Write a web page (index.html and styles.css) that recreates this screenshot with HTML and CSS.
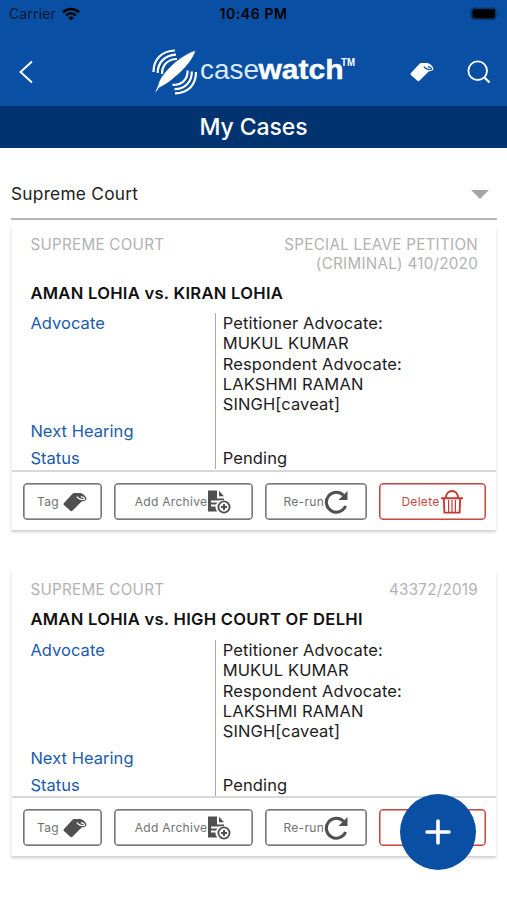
FILE: index.html
```html
<!DOCTYPE html>
<html lang="en">
<head>
<meta charset="utf-8">
<title>My Cases</title>
<link rel="stylesheet" href="styles.css">
</head>
<body>
<svg class="defs" width="0" height="0" aria-hidden="true">
  <symbol id="tag" viewBox="0 0 24 20">
    <path fill="currentColor" d="M.8 11.2 8.8 2.4Q10 1 11.7 1H17.5Q22.8 3 23.4 6.6Q23.6 9.2 18.6 9.4L9.6 18.6Q8.3 19.8 7 18.5L.9 13Q0 12.1 .8 11.2Z"/>
    <path class="tag-hole" d="M13.8 4.6C15 7 19 8 21.4 7.2C22 6 19.8 4.6 17.8 4.9" fill="none"/>
  </symbol>
  <symbol id="archive" viewBox="0 0 24 24">
    <path fill="currentColor" d="M1 .5H10V8.5H17V10.2A7 7 0 0 0 10.2 21.5H1Z"/>
    <path fill="currentColor" d="M12 .8 17 6.2H12Z"/>
    <path d="M4 11.5H13M4 15.5H10" stroke="#fff" stroke-width="1.8"/>
    <circle cx="17" cy="17" r="5.6" fill="#fff" stroke="currentColor" stroke-width="1.8"/>
    <path d="M17 14V20M14 17H20" stroke="currentColor" stroke-width="2"/>
  </symbol>
  <symbol id="rerun" viewBox="0 0 24 24">
    <path d="M19.5 5.2A10 10 0 1 0 21.6 16" fill="none" stroke="currentColor" stroke-width="3"/>
    <path d="M23.5 1V10H14.5Z" fill="currentColor"/>
  </symbol>
  <symbol id="trash" viewBox="0 0 24 24">
    <path d="M1 8.2H23M3.8 8.5 4.4 22.6H19.6L20.2 8.5M6 8C6 3 9 1 12 1S18 3 18 8" fill="none" stroke="currentColor" stroke-width="1.9"/>
    <path d="M8.6 10V22M12 10V22M15.4 10V22" fill="none" stroke="currentColor" stroke-width="1.2"/>
  </symbol>
</svg>

<div class="status-bar">
  <span class="carrier">Carrier</span>
  <svg class="wifi" viewBox="0 0 18 14"><path d="M1 5.3C5.5.9 12.5.9 17 5.3" fill="none" stroke="#000" stroke-width="2.6"/><path d="M4 8.4C7 5.7 11 5.7 14 8.4" fill="none" stroke="#000" stroke-width="2.4"/><path d="M9 13.6 6 10.6Q9 8.4 12 10.6Z"/></svg>
  <span class="clock">10:46 PM</span>
  <svg class="battery" viewBox="0 0 30 14"><rect x=".5" y=".5" width="26" height="12.5" rx="4" fill="#07366f"/><rect x="2.5" y="2.3" width="22.5" height="9" rx="2"/><path d="M28 4.5Q30 6.5 28 8.5Z" fill="#07366f"/></svg>
</div>

<header class="app-bar">
  <svg class="back" viewBox="0 0 16 24"><path d="M14 1.5 2.5 12 14 22.5" fill="none" stroke="#fff" stroke-width="2"/></svg>
  <svg class="logo" viewBox="0 0 206 50">
    <g fill="none" stroke="#fff" stroke-width="2.2">
      <path d="M2.5 25C2.5 12 11 3.8 24 3.5M6.7 26C6.7 15.5 13.5 8.3 25 7.7M11 27C11 18 16.5 12.3 26 12"/>
      <path d="M45 25C45 38 37 46 24 46.3M40.8 24.5C41 35 34 42 23.5 42.2M36.6 23.5C36.8 32 31.5 38 21.5 37.9"/>
    </g>
    <path d="M44.8 3.3C42.5 12 34.5 21 26.5 28C19.5 34.500 12 39.5 8.5 40.5L5 45.500 4.200 44.500 7 38C8 32 14 24.500 21.500 17.500C28.500 11 38 5 44.800 3.300Z" fill="#fff" stroke="#094fa3" stroke-width=".8"/>
    <text class="logo-light" x="49" y="31.5" textLength="59" lengthAdjust="spacingAndGlyphs">case</text>
    <text class="logo-bold" x="107.5" y="31.5" textLength="85" lengthAdjust="spacingAndGlyphs">watch</text>
    <text class="logo-tm" x="190" y="18.500" textLength="14" lengthAdjust="spacingAndGlyphs">TM</text>
  </svg>
  <svg class="head-tag"><use href="#tag"/></svg>
  <svg class="search" viewBox="0 0 24 24"><circle cx="10.7" cy="10.7" r="9.3" fill="none" stroke="#fff" stroke-width="1.8"/><path d="M17.5 17.5 22.5 22.5" stroke="#fff" stroke-width="2.2"/></svg>
</header>
<h1 class="page-title"><span>My Cases</span></h1>

<main>
  <div class="select"><span>Supreme Court</span><i class="caret"></i></div>

  <article class="card">
    <div class="card-body">
      <div class="meta"><span>SUPREME COURT</span><span class="case-no">SPECIAL LEAVE PETITION<br>(CRIMINAL) 410/2020</span></div>
      <h2>AMAN LOHIA vs. KIRAN LOHIA</h2>
      <dl>
        <dt>Advocate</dt><dd class="advocates">Petitioner Advocate:<br>MUKUL KUMAR<br>Respondent Advocate:<br>LAKSHMI RAMAN<br>SINGH[caveat]</dd>
        <dt>Next Hearing</dt><dd></dd>
        <dt>Status</dt><dd>Pending</dd>
      </dl>
    </div>
    <div class="actions">
      <button class="btn tag-btn"><span>Tag</span><svg><use href="#tag"/></svg></button>
      <button class="btn archive-btn"><span>Add Archive</span><svg><use href="#archive"/></svg></button>
      <button class="btn rerun-btn"><span>Re-run</span><svg><use href="#rerun"/></svg></button>
      <button class="btn delete-btn"><span>Delete</span><svg><use href="#trash"/></svg></button>
    </div>
  </article>

  <article class="card">
    <div class="card-body">
      <div class="meta"><span>SUPREME COURT</span><span class="case-no">43372/2019</span></div>
      <h2>AMAN LOHIA vs. HIGH COURT OF DELHI</h2>
      <dl>
        <dt>Advocate</dt><dd class="advocates">Petitioner Advocate:<br>MUKUL KUMAR<br>Respondent Advocate:<br>LAKSHMI RAMAN<br>SINGH[caveat]</dd>
        <dt>Next Hearing</dt><dd></dd>
        <dt>Status</dt><dd>Pending</dd>
      </dl>
    </div>
    <div class="actions">
      <button class="btn tag-btn"><span>Tag</span><svg><use href="#tag"/></svg></button>
      <button class="btn archive-btn"><span>Add Archive</span><svg><use href="#archive"/></svg></button>
      <button class="btn rerun-btn"><span>Re-run</span><svg><use href="#rerun"/></svg></button>
      <button class="btn delete-btn" aria-label="Delete"></button>
    </div>
  </article>
</main>
<button class="fab" aria-label="Add case"><svg viewBox="0 0 26 26"><path d="M13 2V24M2 13H24" stroke="#fff" stroke-width="3.6" stroke-linecap="round"/></svg></button>
</body>
</html>
```
FILE: styles.css
```css
* { box-sizing: border-box; }
body { margin: 0; height: 900px; overflow: hidden; position: relative; background: #fff; color: #1c1c1c; font: 16.5px/20.4px Inter, "Liberation Sans", sans-serif; }
svg { display: block; flex: none; }
.defs { position: absolute; }
h1, h2, dl, dd { margin: 0; }
.status-bar { height: 28px; background: #094fa3; color: #000; display: grid; grid-template-columns: 52px 1fr auto 1fr; align-items: center; padding: 0 7px 0 9px; }
.carrier { font-size: 13.8px; letter-spacing: .25px; color: #06182f; }
.wifi { width: 18px; height: 14px; margin-left: 1px; }
.clock { font-weight: 600; font-size: 14px; letter-spacing: .6px; margin-left: -54px; }
.battery { width: 30px; height: 14px; justify-self: end; }
.app-bar { height: 78px; background: #094fa3; display: flex; align-items: center; padding: 10px 16px 0 18px; }
.back { width: 16px; height: 24px; }
.logo { width: 206px; height: 50px; margin-left: 117px; }
.logo-light, .logo-bold, .logo-tm { font-family: "Liberation Sans", Arial, sans-serif; fill: #fff; }
.logo-light { font-size: 28px; fill: #dbe7f7; }
.logo-bold { font-size: 28px; font-weight: 700; stroke: #fff; stroke-width: .4px; }
.logo-tm { font-size: 10px; font-weight: 700; }
.head-tag { width: 24px; height: 20px; margin-left: 53px; color: #fff; stroke: #094fa3; stroke-width: 0; }
.tag-hole { stroke-width: 1.2px; }
.search { width: 24px; height: 24px; margin-left: auto; }
.page-title { height: 42px; background: #003370; color: #fff; display: flex; align-items: center; justify-content: center; font-size: 23px; font-weight: 500; letter-spacing: -.1px; }
main { padding: 0 10px 0 11px; }
.select { height: 72px; margin-bottom: 8px; padding: 22px 8px 0 0; border-bottom: 2px solid #b5b5b5; display: flex; align-items: center; justify-content: space-between; font-size: 17.3px; letter-spacing: .25px; }
.caret { border: 9px solid transparent; border-top-color: #a3a3a3; border-bottom: 0; }
.card { height: 302px; margin: 0 0 42px -1px; box-shadow: 0 3px 3px -1px #ccc; border: solid #f3f3f3; border-width: 0 1px 0 2px; display: flex; flex-direction: column; }
.card + .card { height: 284px; }
.card-body { flex: 1; padding: 6.5px 18px 0 18.4px; border-bottom: 2px solid #d8d8d8; }
.card + .card .card-body { padding-top: 8px; }
.meta { display: flex; justify-content: space-between; color: #b2b2b2; font-size: 15.2px; line-height: 19.4px; letter-spacing: .27px; }
.case-no { text-align: right; }
h2 { font-size: 16.6px; font-weight: 600; line-height: 24px; margin-top: 7.6px; color: #111; white-space: nowrap; letter-spacing: .27px; }
.card + .card h2 { margin-top: 8px; }
dl { display: grid; grid-template-columns: 185px 1fr; height: 156px; margin-top: 7.9px; background: linear-gradient(#aaa, #aaa) 185px 0 / 1px 100% no-repeat; letter-spacing: .12px; }
.card + .card dl { margin-top: 8.4px; }
dt { color: #1a5bac; height: 27px; letter-spacing: .04px; }
dd { padding-left: 7.3px; height: 27px; }
dd.advocates { height: 108px; }
.actions { height: 58px; display: flex; align-items: center; padding: 1px 0 0 10.5px; gap: 12px; }
.btn { height: 37px; padding: 0; border: 1.5px solid #777; border-radius: 4px; background: #fff; color: #505050; font: 12px Inter, sans-serif; display: flex; align-items: center; justify-content: center; box-shadow: inset 0 0 0 .5px currentColor; }
.btn span { color: #707070; letter-spacing: .3px; }
.btn svg { width: 24px; height: 24px; stroke: #fff; stroke-width: 0; margin-left: 0; }
.tag-btn { width: 79px; gap: 4px; }
.tag-btn svg { height: 20px; }
.archive-btn { width: 139px; }
.rerun-btn { width: 102.5px; }
.delete-btn { width: 107px; border-color: #cb4541; color: #c23b35; }
.btn.delete-btn span { color: #c74b47; }
.fab { position: absolute; left: 400px; top: 794px; width: 76px; height: 76px; border: 0; border-radius: 50%; background: #094fa3; display: flex; align-items: center; justify-content: center; padding: 0; }
.fab svg { width: 26px; height: 26px; }
```
